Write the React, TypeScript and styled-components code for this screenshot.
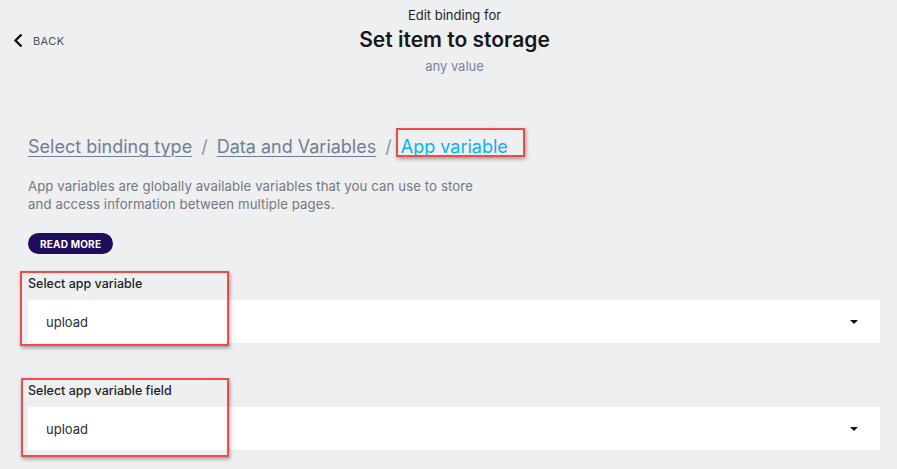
import React from "react";
import styled, { createGlobalStyle } from "styled-components";

const Global = createGlobalStyle`
  html, body { margin: 0; padding: 0; background: #eeeff1; }
  body { font-family: "Inter", "Noto Sans", sans-serif; color: #1d1f24; }
  * { box-sizing: border-box; }
`;

const Page = styled.div`
  position: relative;
  width: 897px;
  height: 469px;
  overflow: hidden;
  background: #eeeff1;
`;

const Header = styled.header`
  display: grid;
  grid-template-columns: 1fr auto 1fr;
  align-items: start;
  padding-top: 7px;
  height: 128px;
`;

const BackButton = styled.button`
  display: flex;
  align-items: center;
  gap: 9px;
  margin: 26px 0 0 13px;
  padding: 0;
  border: 0;
  background: none;
  font-family: inherit;
  font-size: 11px;
  letter-spacing: 0.4px;
  color: #4b505d;
  cursor: pointer;
  justify-self: start;
`;

const TitleBlock = styled.div`
  display: flex;
  flex-direction: column;
  align-items: center;
  margin-left: 12px;
`;

const Eyebrow = styled.div`
  font-size: 13px;
  line-height: 17px;
  color: #1d1f24;
`;

const Title = styled.h1`
  margin: 3px 0 0;
  font-size: 21px;
  line-height: 25px;
  font-weight: 600;
  color: #15171b;
`;

const Subtitle = styled.div`
  margin-top: 6px;
  font-size: 13px;
  line-height: 17px;
  color: #7883a0;
`;

const Content = styled.main`
  padding: 0 17px 0 28px;
`;

const Breadcrumbs = styled.nav`
  display: flex;
  align-items: baseline;
  gap: 9px;
  font-size: 18px;
  line-height: 24px;
  margin-top: 7px;
`;

const Crumb = styled.a<{ $current?: boolean }>`
  color: ${(p) => (p.$current ? "#0ab3f7" : "#737d95")};
  text-decoration: ${(p) => (p.$current ? "none" : "underline")};
  text-underline-offset: 3px;
  text-decoration-thickness: 1px;
  cursor: pointer;
`;

const Sep = styled.span`
  color: #8a92a6;
`;

const Description = styled.p`
  margin: 18px 0 0;
  font-size: 13.2px;
  letter-spacing: 0.1px;
  line-height: 18px;
  color: #74777f;
  max-width: 450px;
`;

const ReadMore = styled.button`
  margin-top: 20px;
  height: 21px;
  padding: 0 12px;
  border: 0;
  border-radius: 11px;
  background: #1f0c5c;
  color: #fff;
  font-family: inherit;
  font-size: 10px;
  font-weight: 700;
  letter-spacing: 0.2px;
  cursor: pointer;
`;

const Field = styled.div<{ $gap: number }>`
  margin-top: ${(p) => p.$gap}px;
  display: flex;
  flex-direction: column;
`;

const Label = styled.label`
  font-size: 12.5px;
  font-weight: 500;
  line-height: 15px;
  color: #1d1f24;
`;

const Select = styled.div`
  margin-top: 9px;
  height: 43px;
  background: #fff;
  display: flex;
  align-items: center;
  justify-content: space-between;
  padding: 0 22px 0 18px;
  font-size: 13px;
  color: #2a2d33;
`;

const Caret = styled.span`
  width: 0;
  height: 0;
  border-left: 4.5px solid transparent;
  border-right: 4.5px solid transparent;
  border-top: 4px solid #111;
`;

const Highlight = styled.div<{ $x: number; $y: number; $w: number; $h: number }>`
  position: absolute;
  left: ${(p) => p.$x}px;
  top: ${(p) => p.$y}px;
  width: ${(p) => p.$w}px;
  height: ${(p) => p.$h}px;
  border: 2px solid #f24a4a;
  box-shadow: 1px 2px 4px rgba(0, 0, 0, 0.35);
  pointer-events: none;
`;

const Chevron = () => (
  <svg width="11" height="15" viewBox="0 0 11 15">
    <path d="M8.5 1.5 L2.5 7.5 L8.5 13.5" fill="none" stroke="#111" strokeWidth="2.4" />
  </svg>
);

export default function App() {
  return (
    <Page>
      <Global />
      <Header>
        <BackButton>
          <Chevron />
          BACK
        </BackButton>
        <TitleBlock>
          <Eyebrow>Edit binding for</Eyebrow>
          <Title>Set item to storage</Title>
          <Subtitle>any value</Subtitle>
        </TitleBlock>
        <div />
      </Header>
      <Content>
        <Breadcrumbs>
          <Crumb>Select binding type</Crumb>
          <Sep>/</Sep>
          <Crumb>Data and Variables</Crumb>
          <Sep>/</Sep>
          <Crumb $current>App variable</Crumb>
        </Breadcrumbs>
        <Description>
          App variables are globally available variables that you can use to store and access
          information between multiple pages.
        </Description>
        <ReadMore>READ MORE</ReadMore>
        <Field $gap={22}>
          <Label>Select app variable</Label>
          <Select>
            upload
            <Caret />
          </Select>
        </Field>
        <Field $gap={40}>
          <Label>Select app variable field</Label>
          <Select>
            upload
            <Caret />
          </Select>
        </Field>
      </Content>
      <Highlight $x={396} $y={128} $w={129} $h={29} />
      <Highlight $x={20} $y={271} $w={209} $h={75} />
      <Highlight $x={21} $y={378} $w={208} $h={79} />
    </Page>
  );
}
